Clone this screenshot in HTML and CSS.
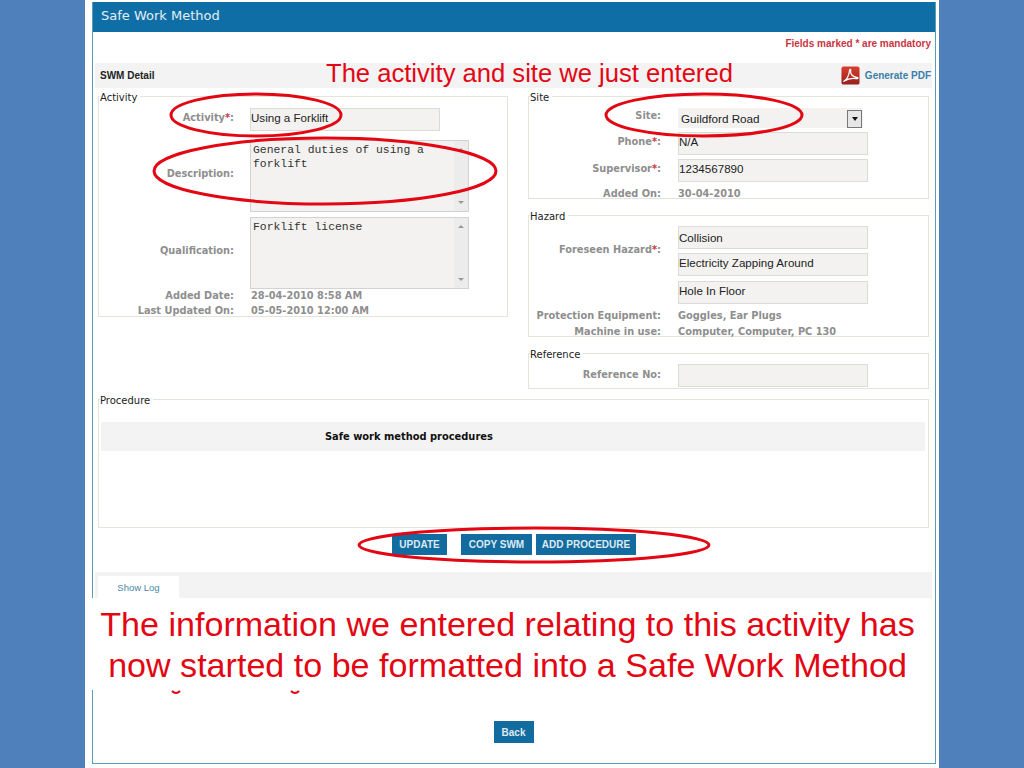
FILE: index.html
```html
<!DOCTYPE html>
<html>
<head>
	<title>Safe Work Method</title>
	<link rel="stylesheet" href="styles.css">
</head>
<body>
	<div class="slide">
		<div class="swm">
			<div class="swm__title">Safe Work Method</div>
			<div class="swm__mandatory">Fields marked * are mandatory</div>
			<div class="swm__detail">
				<div class="swm__detail-name">SWM Detail</div>
				<a class="swm__pdf">
					<svg class="swm__pdf-icon" viewBox="0 0 20 20">
						<defs>
							<linearGradient id="pdfRed" x1="0" y1="0" x2="0" y2="1">
								<stop offset="0" stop-color="#d9402f"/>
								<stop offset="1" stop-color="#96201c"/>
							</linearGradient>
						</defs>
						<rect x="0.5" y="0.5" width="19" height="19" rx="2" fill="url(#pdfRed)"/>
						<path d="M2.5 16.5C6 14.5 8.5 9.5 9 4.5C9.3 2.8 10.6 3.4 10.2 5.2C9.6 8 11.5 11.5 17.5 12.2C18.4 12.6 17.6 13.6 16.4 13.3C12 12.6 7.5 13 3.6 15.8" fill="none" stroke="#fff" stroke-width="1.3"/>
					</svg>
					<span>Generate PDF</span>
				</a>
			</div>

			<div class="swm__columns">
				<fieldset class="group group--activity">
					<legend>Activity</legend>
					<div class="row row--left row--input">
						<label>Activity<i>*</i>:</label>
						<input class="field field--activity" value="Using a Forklift">
					</div>
					<div class="row row--left row--area row--area-first">
						<label>Description:</label>
						<div class="area">
							<textarea class="area__text">General duties of using a forklift</textarea>
							<div class="area__bar"><b class="up"></b><b class="down"></b></div>
						</div>
					</div>
					<div class="row row--left row--area">
						<label>Qualification:</label>
						<div class="area">
							<textarea class="area__text">Forklift license</textarea>
							<div class="area__bar"><b class="up"></b><b class="down"></b></div>
						</div>
					</div>
					<div class="row row--left row--text row--tight">
						<label>Added Date:</label>
						<span>28-04-2010 8:58 AM</span>
					</div>
					<div class="row row--left row--text">
						<label>Last Updated On:</label>
						<span>05-05-2010 12:00 AM</span>
					</div>
				</fieldset>

				<div class="swm__right">
					<fieldset class="group group--site">
						<legend>Site</legend>
						<div class="row row--right row--select">
							<label>Site:</label>
							<div class="select">
								<span>Guildford Road</span>
								<b class="select__arrow"></b>
							</div>
						</div>
						<div class="row row--right row--input">
							<label>Phone<i>*</i>:</label>
							<input class="field" value="N/A">
						</div>
						<div class="row row--right row--input">
							<label>Supervisor<i>*</i>:</label>
							<input class="field" value="1234567890">
						</div>
						<div class="row row--right row--text row--first-text">
							<label>Added On:</label>
							<span>30-04-2010</span>
						</div>
					</fieldset>

					<fieldset class="group group--hazard">
						<legend>Hazard</legend>
						<div class="row row--right">
							<label class="label--hazard">Foreseen Hazard<i>*</i>:</label>
							<div class="stack">
								<input class="field field--low" value="Collision">
								<input class="field" value="Electricity Zapping Around">
								<input class="field" value="Hole In Floor">
							</div>
						</div>
						<div class="row row--right row--text row--loose">
							<label>Protection Equipment:</label>
							<span>Goggles, Ear Plugs</span>
						</div>
						<div class="row row--right row--text row--machine">
							<label>Machine in use:</label>
							<span>Computer, Computer, PC 130</span>
						</div>
					</fieldset>

					<fieldset class="group group--reference">
						<legend>Reference</legend>
						<div class="row row--right row--input">
							<label class="label--reference">Reference No:</label>
							<input class="field">
						</div>
					</fieldset>
				</div>
			</div>

			<fieldset class="group group--procedure">
				<legend>Procedure</legend>
				<div class="procedure__head">Safe work method procedures</div>
			</fieldset>

			<div class="swm__actions">
				<button class="btn btn--update">UPDATE</button>
				<button class="btn btn--copy">COPY SWM</button>
				<button class="btn btn--add">ADD PROCEDURE</button>
			</div>

			<div class="tabs">
				<div class="tabs__item">Show Log</div>
			</div>
			<div class="swm__back">
				<button class="btn btn--back">Back</button>
			</div>
		</div>

		<!-- annotations sitting on top of the screenshot -->
		<div class="note note--top">The activity and site we just entered</div>
		<div class="note note--bottom">The information we entered relating to this activity has<br>now started to be formatted into a Safe Work Method</div>
		<svg class="marks" viewBox="0 0 1024 768">
			<ellipse cx="256" cy="115" rx="85" ry="21"/>
			<ellipse cx="325" cy="171" rx="171" ry="33"/>
			<ellipse cx="704" cy="115" rx="98" ry="21"/>
			<ellipse cx="534" cy="545" rx="175" ry="17"/>
			<path class="marks__tail" d="M172 691q4 4 8 0"/>
			<path class="marks__tail" d="M291 691q4 4 8 0"/>
		</svg>
	</div>
</body>
</html>
```

FILE: styles.css
```css
* {
	box-sizing: border-box;
}
html, body {
	margin: 0;
	height: 768px;
	overflow: hidden;
}
body {
	background: #4f80bb; /* slide blue */
	font-family: "DejaVu Sans", Verdana, sans-serif;
}
.slide {
	width: 854px;
	height: 768px;
	margin-left: 85px;
	padding: 2px 3px 0 7px;
	background: #fff;
}
.swm {
	height: 762px;
	border: 1px solid #5b9db3;
	border-top: none;
	background: #fff;
}
.swm__title {
	height: 30px;
	padding-left: 8px;
	line-height: 28px;
	font-size: 13px;
	color: #e4eef4;
	background: #0f6ea5;
}
.swm__mandatory {
	height: 31px;
	padding: 5px 4px 0 0;
	text-align: right;
	line-height: 14px;
	font-family: "Liberation Sans", Arial, sans-serif;
	font-size: 10px;
	font-weight: bold;
	color: #c9353f;
}
.swm__detail {
	display: flex;
	align-items: center;
	justify-content: space-between;
	height: 25px;
	margin: 0 3px 0 2px;
	padding: 0 1px 0 5px;
	background: #f3f3f3;
	font-family: "Liberation Sans", Arial, sans-serif;
	font-size: 10px;
	font-weight: bold;
}
.swm__detail-name {
	color: #222;
}
.swm__pdf {
	display: flex;
	align-items: center;
	gap: 5px;
	color: #3b80a8;
}
.swm__pdf-icon {
	width: 19px;
	height: 19px;
}
.swm__columns {
	display: grid;
	grid-template-columns: 410px 401px;
	gap: 20px;
	margin: 1px 0 0 5px;
	height: 297px;
}
.swm__right {
	display: flex;
	flex-direction: column;
}

/* fieldsets */
.group {
	margin: 0;
	padding: 0;
	min-width: 0;
	border: 1px solid #e4e4da;
	color: #222;
}
.group legend {
	margin-left: 1px;
	padding: 4px 3px 0 0;
	line-height: 10px;
	font-size: 10px;
}
.group--activity {
	height: 228px;
	padding-top: 3px;
}
.group--site {
	height: 110px;
	padding-top: 3px;
}
.group--hazard {
	height: 129px;
	margin-top: 9px;
	padding-top: 4px;
}
.group--reference {
	height: 43px;
	margin-top: 9px;
	padding-top: 2px;
}
.group--procedure {
	height: 136px;
	margin: 6px 6px 0 5px;
	padding: 16px 3px 0 2px;
}
.group--procedure legend {
	margin-left: -1px;
}
.procedure__head {
	height: 29px;
	padding-left: 224px;
	line-height: 29px;
	font-size: 9.9px;
	font-weight: bold;
	color: #111;
	background: #f3f3f3;
}

/* label + value rows */
.row {
	display: grid;
	align-items: center;
	font-size: 9.8px;
	font-weight: bold;
	color: #8e8e8e;
}
.row--left {
	grid-template-columns: 135px auto;
	column-gap: 16px;
}
.row--right {
	grid-template-columns: 132px auto;
	column-gap: 17px;
}
.row label {
	text-align: right;
}
.row label i {
	font-style: normal;
	color: #c9353f;
}
.row--input label,
.row--area label,
.row--select label {
	margin-bottom: 5px;
}
.row--input .label--reference {
	margin-bottom: 3px;
}
.row--input {
	height: 27px;
}
.row--area {
	height: 72px;
	margin-top: 5px;
}
.row--area-first {
	margin-top: 7px;
}
.row--select {
	height: 24px;
}
.row--text {
	height: 15px;
	line-height: 15px;
	white-space: nowrap;
}
.row--left.row--text span {
	padding-left: 1px;
}
.row--first-text {
	margin-top: 2px;
}
.row--tight {
	margin-top: -1px;
}
.row--loose {
	margin-top: 4px;
}
.row--machine {
	margin-top: 1px;
}
.label--hazard {
	align-self: start;
	margin-top: 18px;
}
.stack {
	display: flex;
	flex-direction: column;
	gap: 4px;
}
.stack .field:last-child {
	margin-top: 1px;
}
.field {
	display: block;
	width: 190px;
	height: 23px;
	padding: 0 0 5px;
	border: 1px solid #dcdcd6;
	border-radius: 0;
	outline: none;
	background: #f3f2f0;
	font-family: "Liberation Sans", Arial, sans-serif;
	font-size: 11.6px;
	color: #222;
}
.field--low {
	padding-bottom: 0;
}
.select {
	display: flex;
	align-items: center;
	justify-content: space-between;
	width: 185px;
	height: 20px;
	padding: 1px 1px 0 3px;
	background: #f3f2f0;
	font-family: "Liberation Sans", Arial, sans-serif;
	font-size: 11.7px;
	font-weight: normal;
	color: #222;
}
.select__arrow {
	display: flex;
	align-items: center;
	justify-content: center;
	width: 15px;
	height: 18px;
	border: 1px solid #777;
	background: #e6e6e6;
}
.select__arrow::before {
	content: "";
	border: 3px solid transparent;
	border-top: 4px solid #111;
	border-bottom: none;
}
.area {
	display: flex;
	width: 219px;
	height: 72px;
	border: 1px solid #d2d2d2;
	background: #f3f2f0;
}
.area__text {
	flex: 1;
	padding: 2px 2px 0;
	border: none;
	outline: none;
	resize: none;
	overflow: hidden;
	background: transparent;
	font-family: "Liberation Mono", "Courier New", monospace;
	font-size: 11.4px;
	line-height: 14px;
	color: #333;
}
.area__bar {
	display: flex;
	flex-direction: column;
	align-items: center;
	justify-content: space-between;
	width: 14px;
	padding: 7px 0;
	background: #ececec;
}
.area__bar .up {
	border: 3px solid transparent;
	border-bottom: 3px solid #999;
	border-top: none;
}
.area__bar .down {
	border: 3px solid transparent;
	border-top: 3px solid #999;
	border-bottom: none;
}

/* buttons and tab */
.swm__actions {
	display: flex;
	justify-content: flex-start;
	height: 44px;
	gap: 4px;
	padding: 6px 0 0 299px;
}
.btn {
	height: 21px;
	padding: 0;
	border: none;
	border-radius: 0;
	background: #126ca0;
	font-family: "Liberation Sans", Arial, sans-serif;
	font-size: 10px;
	font-weight: bold;
	color: #dfe9f0;
	white-space: nowrap;
}
.btn--update {
	width: 55px;
	margin-right: 10px;
}
.btn--copy {
	width: 71px;
}
.btn--add {
	width: 100px;
}
.tabs {
	display: flex;
	height: 27px;
	margin: 0 3px 0 2px;
	padding: 4px 0 0 3px;
	background: #f3f3f3;
}
.tabs__item {
	width: 81px;
	padding-top: 6px;
	text-align: center;
	font-family: "Liberation Sans", Arial, sans-serif;
	font-size: 9.5px;
	color: #4a88a8;
	background: #fff;
}
.swm__back {
	display: flex;
	justify-content: center;
	padding-top: 122px;
	padding-right: 1px;
}
.btn--back {
	width: 40px;
	height: 22px;
}

/* annotations */
.note {
	position: absolute;
	font-family: "Liberation Sans", Arial, sans-serif;
	color: #e30613;
	text-align: center;
}
.note--top {
	top: 58px;
	left: 326px;
	font-size: 25.6px;
	line-height: 30px;
}
.note--bottom {
	top: 598px;
	left: 85px;
	width: 845px;
	height: 92px;
	padding-top: 6px;
	font-size: 34.1px;
	line-height: 41px;
	background: #fff;
}
.marks {
	position: absolute;
	top: 0;
	left: 0;
	width: 1024px;
	height: 768px;
	pointer-events: none;
}
.marks ellipse,
.marks__tail {
	fill: none;
	stroke: #e30613;
	stroke-width: 3;
}
.marks__tail {
	stroke-width: 2;
}
```
